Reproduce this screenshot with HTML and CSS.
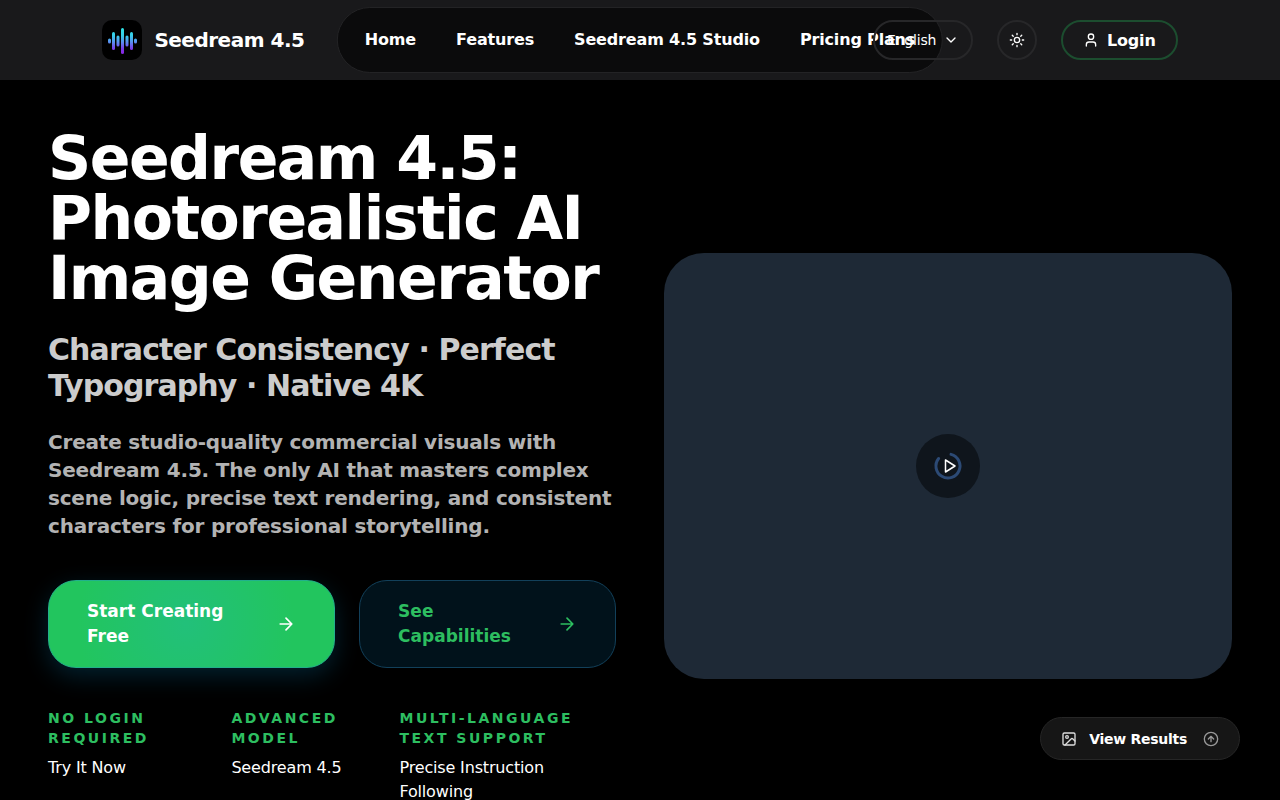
FILE: index.html
```html
<!DOCTYPE html>
<html lang="en">
<head>
    <meta charset="UTF-8">
    <meta name="viewport" content="width=device-width, initial-scale=1">
    <title>Seedream 4.5</title>
    <link rel="stylesheet" href="styles.css">
</head>
<body>

<header class="header">
    <a class="brand" href="#">
        <svg class="brand-logo" viewBox="0 0 40 40" aria-hidden="true">
            <defs>
                <linearGradient id="wave" gradientUnits="userSpaceOnUse" x1="0" y1="8" x2="0" y2="34">
                    <stop offset="0" stop-color="#2ee6e6"/>
                    <stop offset="0.3" stop-color="#38cdea"/>
                    <stop offset="0.55" stop-color="#5a8cf0"/>
                    <stop offset="0.8" stop-color="#7a3ae8"/>
                    <stop offset="1" stop-color="#8b22e0"/>
                </linearGradient>
            </defs>
            <rect width="40" height="40" rx="10" fill="#000"/>
            <g fill="url(#wave)">
                <rect x="6" y="18.5" width="3" height="5" rx="1.5"/>
                <rect x="10" y="12" width="3" height="18" rx="1.5"/>
                <rect x="14.5" y="15.5" width="3" height="11" rx="1.5"/>
                <rect x="19" y="8" width="3" height="26" rx="1.5"/>
                <rect x="23.5" y="15.5" width="3" height="11" rx="1.5"/>
                <rect x="28" y="12" width="3" height="18" rx="1.5"/>
                <rect x="32" y="18.5" width="3" height="5" rx="1.5"/>
            </g>
        </svg>
        <span class="brand-name">Seedream 4.5</span>
    </a>

    <nav class="nav">
        <a href="#">Home</a>
        <a href="#">Features</a>
        <a href="#">Seedream 4.5 Studio</a>
        <a href="#">Pricing Plans</a>
    </nav>

    <div class="tools">
        <div class="lang">
            <select class="lang-select" aria-label="Language">
                <option>English</option>
            </select>
            <svg class="lang-arrow icon" viewBox="0 0 24 24" aria-hidden="true"><path d="m6 9 6 6 6-6"/></svg>
        </div>
        <button class="theme" type="button" aria-label="Toggle theme">
            <svg class="icon" viewBox="0 0 24 24" aria-hidden="true"><circle cx="12" cy="12" r="4"/><path d="M12 2v2M12 20v2M4.93 4.93l1.41 1.41M17.66 17.66l1.41 1.41M2 12h2M20 12h2M6.34 17.66l-1.41 1.41M19.07 4.93l-1.41 1.41"/></svg>
        </button>
        <button class="login" type="button">
            <svg class="icon" viewBox="0 0 24 24" aria-hidden="true"><path d="M19 21v-2a4 4 0 0 0-4-4H9a4 4 0 0 0-4 4v2"/><circle cx="12" cy="7" r="4"/></svg>
            Login
        </button>
    </div>
</header>

<main class="hero">
    <div class="hero-text">
        <h1 class="title">Seedream 4.5: Photorealistic AI Image Generator</h1>
        <h2 class="subtitle">Character Consistency · Perfect Typography · Native 4K</h2>
        <p class="intro">Create studio-quality commercial visuals with Seedream 4.5. The only AI that masters complex scene logic, precise text rendering, and consistent characters for professional storytelling.</p>

        <div class="actions">
            <a class="btn btn-primary" href="#">
                <span>Start Creating Free</span>
                <svg class="icon" viewBox="0 0 24 24" aria-hidden="true"><path d="M5 12h14M12 5l7 7-7 7"/></svg>
            </a>
            <a class="btn btn-ghost" href="#">
                <span>See Capabilities</span>
                <svg class="icon" viewBox="0 0 24 24" aria-hidden="true"><path d="M5 12h14M12 5l7 7-7 7"/></svg>
            </a>
        </div>

        <dl class="facts">
            <div class="fact">
                <dt>No Login Required</dt>
                <dd>Try It Now</dd>
            </div>
            <div class="fact">
                <dt>Advanced Model</dt>
                <dd>Seedream 4.5</dd>
            </div>
            <div class="fact">
                <dt>Multi-Language Text Support</dt>
                <dd>Precise Instruction Following</dd>
            </div>
        </dl>
    </div>

    <div class="video">
        <button class="play" type="button" aria-label="Play video">
            <svg class="play-icon" viewBox="0 0 64 64" aria-hidden="true">
                <path class="spinner" d="M22.6 24.5A12 12 0 1 0 35 20.4"/>
                <path class="triangle" d="M29.5 26v12l9.5-6z"/>
            </svg>
        </button>
    </div>
</main>

<button class="results" type="button">
    <svg class="icon results-image" viewBox="0 0 24 24" aria-hidden="true"><rect x="3" y="3" width="18" height="18" rx="2"/><circle cx="9" cy="9" r="2"/><path d="m21 15-3.09-3.09a2 2 0 0 0-2.82 0L6 21"/></svg>
    View Results
    <svg class="icon results-up" viewBox="0 0 24 24" aria-hidden="true"><circle cx="12" cy="12" r="10"/><path d="m16 12-4-4-4 4M12 16V8"/></svg>
</button>

</body>
</html>
```

FILE: styles.css
```css
* {
    box-sizing: border-box;
}
html {
    scrollbar-width: none;
}
body {
    margin: 0;
    background-color: #000;
    color: #fff;
    font-family: "DejaVu Sans", sans-serif;
    font-size: 16px;
    line-height: 24px;
    letter-spacing: -0.01em;
}
a {
    color: inherit;
    text-decoration: none;
}
button, select {
    font-family: inherit;
    letter-spacing: inherit;
    color: inherit;
    background: none;
    cursor: pointer;
}
.icon {
    width: 16px;
    height: 16px;
    flex: none;
    fill: none;
    stroke: currentColor;
    stroke-width: 2;
    stroke-linecap: round;
    stroke-linejoin: round;
}

/* header */
.header {
    position: relative;
    display: flex;
    align-items: center;
    justify-content: space-between;
    height: 80px;
    padding: 0 8%;
    background-color: #19191b;
}
.brand {
    display: flex;
    align-items: center;
    gap: 12px;
}
.brand-logo {
    width: 40px;
    height: 40px;
}
.brand-name {
    font-size: 20px;
    font-weight: bold;
    line-height: 28px;
    letter-spacing: -0.025em;
}
/* sits centred over the bar, may run under the tools */
.nav {
    position: absolute;
    top: 50%;
    left: 50%;
    transform: translate(-50%, -50%);
    display: flex;
    align-items: center;
    gap: 40px;
    height: 66px;
    padding: 0 27px;
    border: 1px solid #232325;
    border-radius: 33px;
    background-color: #0b0b0c;
    font-weight: bold;
    white-space: nowrap;
}
.tools {
    position: relative;
    display: flex;
    align-items: center;
    gap: 24px;
}
.lang {
    position: relative;
    display: flex;
}
.lang-select {
    width: 100px;
    height: 40px;
    padding: 0 12px;
    border: 2px solid #272729;
    border-radius: 20px;
    appearance: none;
    font-size: 14px;
}
.lang-arrow {
    position: absolute;
    top: 12px;
    right: 14px;
    pointer-events: none;
}
.theme {
    display: flex;
    align-items: center;
    justify-content: center;
    width: 40px;
    height: 40px;
    padding: 0;
    border: 2px solid #272729;
    border-radius: 50%;
}
.login {
    display: flex;
    align-items: center;
    gap: 8px;
    height: 40px;
    padding: 0 20px;
    border: 2px solid #1c4d2f;
    border-radius: 20px;
    font-size: 16px;
    font-weight: bold;
}

/* hero */
.hero {
    display: grid;
    grid-template-columns: 1fr 1fr;
    gap: 48px;
    align-items: center;
    padding: 48px 48px 0;
}
.title {
    margin: 0;
    font-size: 60px;
    line-height: 60px;
    letter-spacing: -0.025em;
}
.subtitle {
    margin: 24px 0 0;
    font-size: 30px;
    line-height: 36px;
    letter-spacing: -0.03em;
    color: #ccc;
}
.intro {
    margin: 24px 0 0;
    font-size: 20px;
    font-weight: bold;
    line-height: 28px;
    letter-spacing: -0.01em;
    color: #b3b3b3;
}
.actions {
    display: grid;
    grid-template-columns: 19fr 17fr;
    gap: 24px;
    margin-top: 40px;
}
.btn {
    display: flex;
    align-items: center;
    justify-content: space-between;
    gap: 32px;
    padding: 18px 38px;
    border: 1px solid #12405a;
    border-radius: 28px;
    font-size: 17px;
    font-weight: bold;
    line-height: 25px;
    letter-spacing: normal;
}
.btn .icon {
    width: 20px;
    height: 20px;
}
.btn-primary {
    border-color: #22b08c;
    background: radial-gradient(circle at 48% 50%, #22c07a, #22c55e 70%);
    box-shadow: 0 8px 24px rgba(14, 165, 233, 0.2);
}
.btn-ghost {
    background-color: #01121b;
    color: #2dbe60;
}
.facts {
    display: flex;
    gap: 48px;
    margin: 40px 0 0;
}
.fact dt {
    font-size: 14px;
    font-weight: bold;
    line-height: 20px;
    letter-spacing: 0.18em;
    text-transform: uppercase;
    color: #2dbe60;
}
.fact dd {
    margin: 8px 0 0;
}

.video {
    display: flex;
    align-items: center;
    justify-content: center;
    aspect-ratio: 4 / 3;
    border-radius: 40px;
    background-color: #1e2936;
}
.play {
    width: 64px;
    height: 64px;
    padding: 0;
    border: 0;
    border-radius: 50%;
    background-color: #0f151c;
}
.play-icon {
    display: block;
    fill: none;
}
.spinner {
    stroke: #2c4a75;
    stroke-width: 3;
    stroke-linecap: round;
}
.triangle {
    stroke: #fff;
    stroke-width: 1.5;
    stroke-linejoin: round;
}

/* floating button */
.results {
    position: fixed;
    right: 40px;
    bottom: 40px;
    display: flex;
    align-items: center;
    gap: 12px;
    height: 43px;
    padding: 0 20px;
    border: 1px solid #262626;
    border-radius: 22px;
    background-color: #161616;
    font-size: 14px;
    font-weight: bold;
    letter-spacing: -0.02em;
}
.results-image {
    color: #ddd;
}
.results-up {
    margin-left: 4px;
    color: #999;
}
```
